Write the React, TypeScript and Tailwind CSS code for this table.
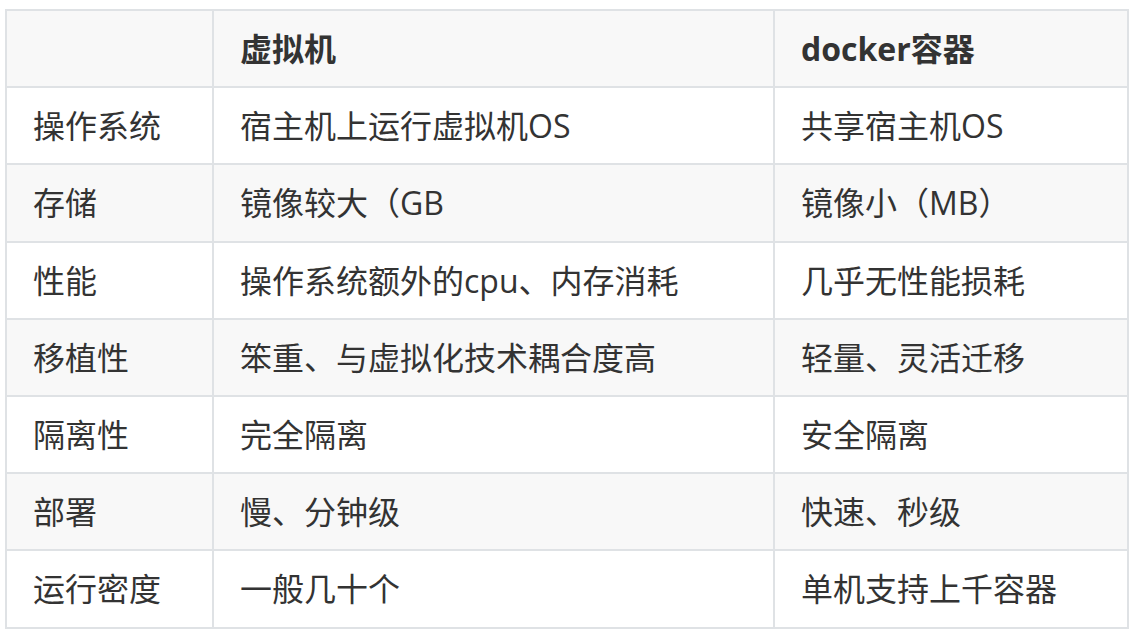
const rows = [
  ["操作系统", "宿主机上运行虚拟机OS", "共享宿主机OS"],
  ["存储", "镜像较大（GB", "镜像小（MB）"],
  ["性能", "操作系统额外的cpu、内存消耗", "几乎无性能损耗"],
  ["移植性", "笨重、与虚拟化技术耦合度高", "轻量、灵活迁移"],
  ["隔离性", "完全隔离", "安全隔离"],
  ["部署", "慢、分钟级", "快速、秒级"],
  ["运行密度", "一般几十个", "单机支持上千容器"],
];

export default function App() {
  const cell = "border-2 border-[#dfe2e5] px-[26px] py-[12px] text-left align-middle";

  return (
    <div
      className="min-h-screen bg-white pl-[5px] pt-[9px] text-[32px] leading-[51.2px] text-[#333]"
      style={{ fontFamily: '"Open Sans", "Noto Sans CJK SC", sans-serif' }}
    >
      <table className="table-fixed border-collapse w-[1122px]">
        <colgroup>
          <col className="w-[207px]" />
          <col className="w-[561px]" />
          <col className="w-[354px]" />
        </colgroup>
        <thead className="bg-[#f8f8f8]">
          <tr>
            <th className={cell}></th>
            <th className={`${cell} font-bold`}>虚拟机</th>
            <th className={`${cell} font-bold`}>docker容器</th>
          </tr>
        </thead>
        <tbody>
          {rows.map((r, i) => (
            <tr key={i} className={i % 2 === 1 ? "bg-[#f8f8f8]" : "bg-white"}>
              {r.map((c, j) => (
                <td key={j} className={cell}>
                  {c}
                </td>
              ))}
            </tr>
          ))}
        </tbody>
      </table>
    </div>
  );
}
